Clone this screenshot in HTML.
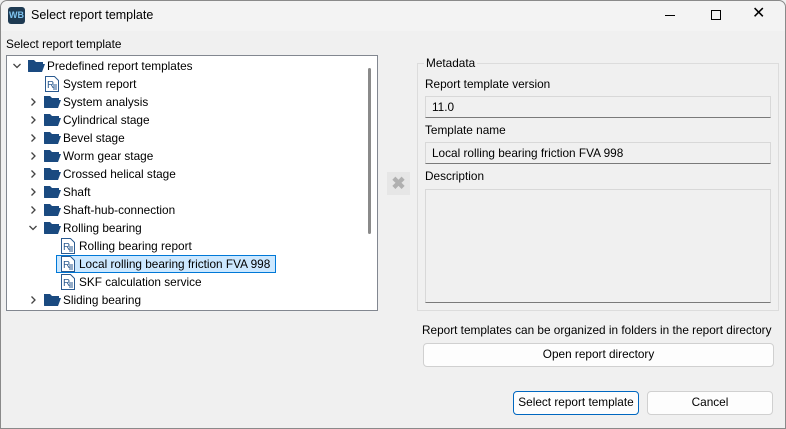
<!DOCTYPE html>
<html><head><style>
*{box-sizing:border-box;margin:0;padding:0}
body{width:786px;height:429px;background:#f0f0f0;font-family:"Liberation Sans",sans-serif;font-size:11.8px;color:#000;position:relative;overflow:hidden}
.abs{position:absolute}
.win{position:absolute;left:0;top:0;width:786px;height:429px;border:1px solid #8a8a8a;border-radius:7px 7px 0 0}
.title{position:absolute;left:1px;top:1px;width:784px;height:30px;background:#f3f3f3;border-radius:7px 7px 0 0}
.row{position:absolute;height:18px;line-height:18px;white-space:nowrap}
.box{position:absolute;background:#f0f0f0;border:1px solid #d8d8d8;border-bottom:1px solid #7a7a7a;padding-left:6px;line-height:20px}
.btn{position:absolute;background:#fdfdfd;border:1px solid #d0d0d0;border-radius:4px;text-align:center;line-height:21px}
</style></head><body>
<div class="win"></div>
<div class="title"></div>
<div class="abs" style="left:8px;top:7px;width:17px;height:17px;background:#1e3a52;border-radius:3px;color:#7ec3ef;font-size:9px;font-weight:bold;line-height:17px;text-align:center">WB</div>
<div class="abs" style="left:31px;top:8px;font-size:12.5px">Select report template</div>
<div class="abs" style="left:665px;top:15px;width:10px;height:1px;background:#000"></div>
<div class="abs" style="left:711px;top:10px;width:10px;height:10px;border:1px solid #000"></div>
<div class="abs" style="left:752px;top:3px;font-size:16px">✕</div>
<div class="abs" style="left:6px;top:37px">Select report template</div>
<div class="abs" style="left:6px;top:55px;width:372px;height:256px;background:#fff;border:1px solid #828790"></div>
<div class="abs" style="left:368px;top:68px;width:3px;height:166px;background:#8a8a8a;border-radius:2px"></div>
<svg width="0" height="0" style="position:absolute"><defs>
<symbol id="fd" viewBox="0 0 18 14"><path d="M1 1h6l2 2h7v2H5L1 13z" fill="#1a4a80"/><path d="M4 5h14l-3 8H1z" fill="#1a4a80"/></symbol>
<symbol id="rp" viewBox="0 0 16 16"><path d="M1.5 0.5h9l4 4v11h-13z" fill="#fff" stroke="#2a5a90"/><text x="3" y="12" font-size="10" font-family="Liberation Sans" fill="#2a5a90">R</text><path d="M9 9h4M9 11h4M9 13h4" stroke="#2a5a90"/></symbol>
<symbol id="cc" viewBox="0 0 10 10"><path d="M3.5 1.5L7 5L3.5 8.5" fill="none" stroke="#444" stroke-width="1.3"/></symbol>
<symbol id="co" viewBox="0 0 10 10"><path d="M1.5 3L5 6.5L8.5 3" fill="none" stroke="#444" stroke-width="1.3"/></symbol>
</defs></svg>
<div id="tree"></div>
<script>
var rows=[[0,'o','Predefined report templates'],[1,'r','System report'],[1,'c','System analysis'],[1,'c','Cylindrical stage'],[1,'c','Bevel stage'],[1,'c','Worm gear stage'],[1,'c','Crossed helical stage'],[1,'c','Shaft'],[1,'c','Shaft-hub-connection'],[1,'o','Rolling bearing'],[2,'r','Rolling bearing report'],[2,'r','Local rolling bearing friction FVA 998'],[2,'r','SKF calculation service'],[1,'c','Sliding bearing']];
var h='';rows.forEach(function(r,i){var y=57+i*18,ind=r[0]*16;
if(i==11)h+='<div class="abs" style="left:56px;top:'+(y)+'px;width:220px;height:18px;background:#cce8ff;border:1px solid #0078d7"></div>';
if(r[1]!='r'){h+='<svg class="abs" style="left:'+(12+ind)+'px;top:'+(y+4)+'px" width="10" height="10"><use href="#'+(r[1]=='o'?'co':'cc')+'"/></svg>';h+='<svg class="abs" style="left:'+(27+ind)+'px;top:'+(y+2)+'px" width="18" height="14"><use href="#fd"/></svg>';}
else h+='<svg class="abs" style="left:'+(27+ind+1)+'px;top:'+(y+1)+'px" width="16" height="16"><use href="#rp"/></svg>';
h+='<div class="row" style="left:'+(47+ind)+'px;top:'+y+'px">'+r[2]+'</div>';});
document.getElementById('tree').innerHTML=h;
</script>
<div class="abs" style="left:387px;top:172px;width:23px;height:23px;background:#e6e6e6;color:#b0b0b0;font-size:17px;font-weight:bold;text-align:center;line-height:23px">✖</div>
<div class="abs" style="left:417px;top:63px;width:362px;height:248px;border:1px solid #dcdcdc"></div>
<div class="abs" style="left:424px;top:56px;background:#f0f0f0;padding:0 2px">Metadata</div>
<div class="abs" style="left:425px;top:77px">Report template version</div>
<div class="box" style="left:425px;top:96px;width:346px;height:22px">11.0</div>
<div class="abs" style="left:425px;top:123px">Template name</div>
<div class="box" style="left:425px;top:142px;width:346px;height:22px">Local rolling bearing friction FVA 998</div>
<div class="abs" style="left:425px;top:169px">Description</div>
<div class="box" style="left:425px;top:189px;width:346px;height:114px"></div>
<div class="abs" style="left:422px;top:323px">Report templates can be organized in folders in the report directory</div>
<div class="btn" style="left:423px;top:343px;width:351px;height:24px">Open report directory</div>
<div class="btn" style="left:513px;top:391px;width:126px;height:24px;border:1px solid #0067c0">Select report template</div>
<div class="btn" style="left:647px;top:391px;width:126px;height:24px">Cancel</div>
</body></html>
